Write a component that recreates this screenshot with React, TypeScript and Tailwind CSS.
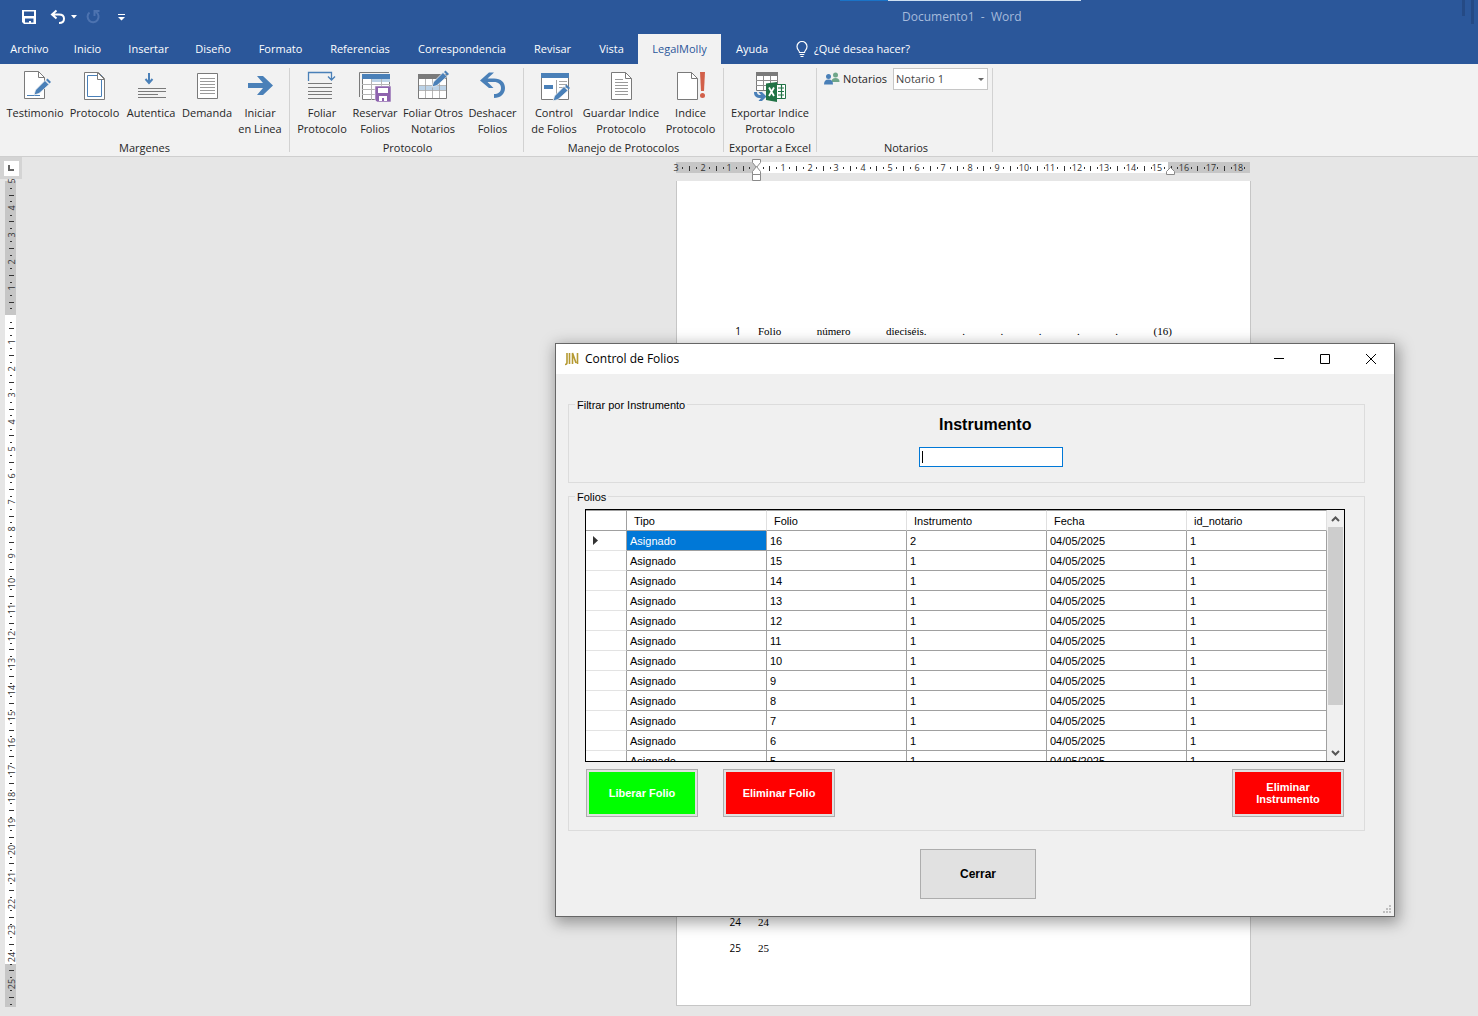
import clsx from "clsx";
import { useState } from "react";

type IconName =
  | "pageEdit"
  | "pageMargins"
  | "arrowLines"
  | "pageLines"
  | "arrowRight"
  | "foliar"
  | "tableSave"
  | "tableEdit"
  | "undo"
  | "formEdit"
  | "pageText"
  | "pageAlert"
  | "excel";

interface IRibbonButton {
  icon: IconName;
  lines: string[];
  width: string;
}

interface IRibbonGroup {
  title: string;
  padding: string;
  buttons: IRibbonButton[];
}

const tabs = [
  { name: "Archivo", width: "w-[59px]" },
  { name: "Inicio", width: "w-[57px]" },
  { name: "Insertar", width: "w-[65px]" },
  { name: "Diseño", width: "w-16" },
  { name: "Formato", width: "w-[71px]" },
  { name: "Referencias", width: "w-[88px]" },
  { name: "Correspondencia", width: "w-[116px]" },
  { name: "Revisar", width: "w-[65px]" },
  { name: "Vista", width: "w-[53px]" },
  { name: "LegalMolly", width: "w-[83px]" },
  { name: "Ayuda", width: "w-[62px]" },
];

const groups: IRibbonGroup[] = [
  {
    title: "Margenes",
    padding: "px-[5px]",
    buttons: [
      { icon: "pageEdit", lines: ["Testimonio"], width: "w-[60px]" },
      { icon: "pageMargins", lines: ["Protocolo"], width: "w-[59px]" },
      { icon: "arrowLines", lines: ["Autentica"], width: "w-[54px]" },
      { icon: "pageLines", lines: ["Demanda"], width: "w-[58px]" },
      { icon: "arrowRight", lines: ["Iniciar", "en Linea"], width: "w-12" },
    ],
  },
  {
    title: "Protocolo",
    padding: "pl-[5px] pr-[3px]",
    buttons: [
      { icon: "foliar", lines: ["Foliar", "Protocolo"], width: "w-[54px]" },
      { icon: "tableSave", lines: ["Reservar", "Folios"], width: "w-[52px]" },
      { icon: "tableEdit", lines: ["Foliar Otros", "Notarios"], width: "w-16" },
      { icon: "undo", lines: ["Deshacer", "Folios"], width: "w-[55px]" },
    ],
  },
  {
    title: "Manejo de Protocolos",
    padding: "px-[3px]",
    buttons: [
      { icon: "formEdit", lines: ["Control", "de Folios"], width: "w-[54px]" },
      { icon: "pageText", lines: ["Guardar Indice", "Protocolo"], width: "w-20" },
      { icon: "pageAlert", lines: ["Indice", "Protocolo"], width: "w-[59px]" },
    ],
  },
  {
    title: "Exportar a Excel",
    padding: "px-1",
    buttons: [
      { icon: "excel", lines: ["Exportar Indice", "Protocolo"], width: "w-[84px]" },
    ],
  },
];

const columns = ["Tipo", "Folio", "Instrumento", "Fecha", "id_notario"];

const rows = [16, 15, 14, 13, 12, 11, 10, 9, 8, 7, 6, 5].map((folio) => ({
  tipo: "Asignado",
  folio,
  instrumento: folio === 16 ? 2 : 1,
  fecha: "04/05/2025",
  notario: 1,
}));

const GRAY = "#7a7a7a";
const BLUE = "#4a80b8";

const Pencil = ({ x, y }: { x: number; y: number }) => (
  <g transform={`translate(${x} ${y})`}>
    <path d="M0 16l1.5-5L11 1.5 15 5.5 5 14.5z" fill={BLUE} stroke="#f2f2f2" strokeWidth="0.8" />
    <path d="M12 1l1.5-1.5 3.5 3.5L15.5 4.5z" fill={BLUE} />
  </g>
);

const Page = ({ x, y }: { x: number; y: number }) => (
  <g transform={`translate(${x} ${y})`}>
    <path d="M.5.5h14l6 6v21H.5z" fill="#fff" stroke={GRAY} />
    <path d="M14.5.5v6h6" fill="none" stroke={GRAY} />
  </g>
);

const RibbonIcon = ({ name }: { name: IconName }) => {
  const art: Record<IconName, React.ReactNode> = {
    pageEdit: (
      <>
        <Page x={5} y={1} />
        <path d="M8 25.5h13" stroke={BLUE} />
        <Pencil x={15} y={9} />
      </>
    ),
    pageMargins: (
      <>
        <path d="M5.5 2.5h14l6 6v21h-20z" fill="#fff" stroke={GRAY} />
        <path d="M8.5 5.5h14v21h-14z" fill="none" stroke={BLUE} />
        <path d="M18.5 2.5v7h7z" fill="#fff" stroke={GRAY} />
      </>
    ),
    arrowLines: (
      <>
        <path d="M14 3v9.5M10.5 9l3.5 4 3.5-4" fill="none" stroke={BLUE} strokeWidth="2" />
        <path d="M3 18.5h28M3 21.5h28M3 24.5h20M3 27.5h28" stroke={GRAY} />
      </>
    ),
    pageLines: (
      <>
        <path d="M6.5 3.5h20v25h-20z" fill="#fff" stroke={GRAY} />
        <path d="M9 8.5h15M9 11.5h15M9 14.5h15M9 17.5h15M9 20.5h15M9 23.5h15" stroke="#9a9a9a" />
      </>
    ),
    arrowRight: (
      <path d="M4 13h15L13 6h6l10 9.5L19 25h-6l6-7H4z" fill={BLUE} />
    ),
    foliar: (
      <>
        <path d="M2.5 11V2.5h23V9M22 6.5l3.5 3.5L29 6.5" fill="none" stroke={BLUE} strokeWidth="1.3" />
        <path d="M2 13.5h24M2 17.5h24M2 21.5h24M2 24.5h24M2 28.5h24" stroke={GRAY} />
      </>
    ),
    tableSave: (
      <>
        <path d="M.5 27V2.5H30" fill="none" stroke={GRAY} />
        <path d="M3.5 4.5h27v25h-27z" fill="#fff" stroke={GRAY} />
        <path d="M3 4h28v5H3z" fill={BLUE} />
        <path d="M13 9h18v3H13z" fill="#bcd3e8" />
        <path d="M3 14.5h28M3 19.5h28M3 24.5h28M12.5 9v21M22.5 9v10" stroke="#b5b5b5" />
        <path d="M16 16h16v16H18l-2-2z" fill="#8e63ae" stroke="#f2f2f2" strokeWidth="0.6" />
        <path d="M19 18h10v5H19zM20 26h8v5h-8z" fill="#fff" />
        <path d="M23 28h2v3h-2z" fill="#8e63ae" />
      </>
    ),
    tableEdit: (
      <>
        <path d="M1.5 4.5h28v24h-28z" fill="#fff" stroke={GRAY} />
        <path d="M1 4h29v5H1z" fill={GRAY} />
        <path d="M2 16h27v4H2z" fill="#bcd3e8" />
        <path d="M8.5 9v19M15.5 9v19M22.5 9v19M2 15.5h27M2 20.5h27" stroke="#a5a5a5" strokeWidth="0.8" />
        <Pencil x={15} y={1} />
      </>
    ),
    undo: (
      <path
        d="M3 10.500L12 2.500h5L10.500 8.500H17c7 0 11 4 11 9.500 0 6-4.500 10-11 10v-4c4 0 7-2 7-6 0-3.500-2.500-6-7-6h-6.500l6 6H12z"
        fill={BLUE}
      />
    ),
    formEdit: (
      <>
        <path d="M3.5 3.5h27v26h-27z" fill="#fff" stroke={GRAY} />
        <path d="M3 3h28v5H3z" fill={BLUE} />
        <path d="M6 15h9v4H6z" fill={BLUE} />
        <path d="M18.5 10v16M21 11.5h8M21 14.5h8M21 17.5h8" stroke="#a5a5a5" />
        <Pencil x={15} y={15} />
      </>
    ),
    pageText: (
      <>
        <Page x={6} y={2} />
        <path d="M10 9.5h8M10 12.5h13M10 15.5h13M10 18.5h13M10 21.5h13M10 24.5h13" stroke="#9a9a9a" />
      </>
    ),
    pageAlert: (
      <>
        <Page x={2} y={2} />
        <path d="M25 2h5l-1 19h-3z" fill="#d2604a" />
        <circle cx="27.5" cy="25.5" r="2.5" fill="#d2604a" />
      </>
    ),
    excel: (
      <>
        <path d="M2.5 2.5h21v18h-21z" fill="#fff" stroke={GRAY} />
        <path d="M2 2h22v4H2z" fill={GRAY} />
        <path d="M2 10.5h22M2 15.5h22M9.5 6v14M16.500 6v14" stroke="#8d8d8d" />
        <path d="M0 22h3c0 2.500 1.500 3 4 3l-2.500-3H8l4.500 4.500L8 31H4.500L7 28c-5 0-7-2-7-6z" fill={BLUE} />
        <path d="M22.5 14.5h9v14h-9z" fill="#fff" stroke="#217346" />
        <path d="M24 18h6M24 21.5h6M24 25h6M27.5 15v13" stroke="#217346" strokeWidth="1.2" />
        <path d="M12 13.5l11-1.5v20l-11-2z" fill="#217346" />
        <path d="M15 17.5l5 8.500M20 17.5l-5 8.500" stroke="#fff" strokeWidth="1.8" />
      </>
    ),
  };

  return (
    <svg width="32" height="32" viewBox="0 0 32 32" className="block shrink-0" aria-hidden="true">
      {art[name]}
    </svg>
  );
};

interface RulerProps {
  vertical?: boolean;
  length: number;
  zero: number;
  end: number;
  from: number;
  to: number;
}

const CM = 26.75;

// Ruler in centimetres, the margins outside [zero, end] are gray
const Ruler: React.FC<RulerProps> = ({ vertical, length, zero, end, from, to }) => {
  const marks: React.ReactNode[] = [];
  for (let i = from * 4; i <= to * 4 + 3; i++) {
    const pos = Math.round(zero + (i * CM) / 4);
    if (pos > length - 2 || pos < 0) continue;
    const part = Math.abs(i) % 4;
    if (part === 0) {
      if (i === 0) continue;
      marks.push(
        <text
          key={i}
          textAnchor="middle"
          transform={vertical ? `translate(10 ${pos}) rotate(-90)` : `translate(${pos} 9)`}
        >
          {Math.abs(i / 4)}
        </text>,
      );
      continue;
    }
    const size = part === 2 ? 5 : 2;
    const start = part === 2 ? 4 : 5;
    marks.push(
      vertical ? (
        <rect key={i} x={start} y={pos} width={size} height="1" />
      ) : (
        <rect key={i} x={pos} y={start} width="1" height={size} />
      ),
    );
  }

  return (
    <svg
      width={vertical ? 11 : length}
      height={vertical ? length : 11}
      className="block overflow-visible font-['Open_Sans',sans-serif] text-[9px]"
      fill="#333"
      aria-hidden="true"
    >
      <rect width={vertical ? 11 : length} height={vertical ? length : 11} fill="#c6c6c6" />
      {vertical ? (
        <rect y={zero} width="11" height={end - zero} fill="#fff" />
      ) : (
        <rect x={zero} width={end - zero} height="11" fill="#fff" />
      )}
      {marks}
      {!vertical && (
        <g fill="#fff" stroke="#8a8a8a">
          <path d={`M${zero - 3.5} -2.500h8v3l-4 5-4-5z`} />
          <path d={`M${zero - 3.5} 12.500v-3l4-5 4 5v3zM${zero - 3.5} 12.500h8v6h-8z`} />
          <path d={`M${end - 1.5} 12.500v-3l4-4 4 4v3z`} />
        </g>
      )}
    </svg>
  );
};

const TitleBar = () => (
  <div className="relative h-[34px] flex items-center text-white">
    <div className="absolute top-0 left-[840px] w-12 h-px bg-[#1a73c7]" />
    <div className="absolute top-0 left-[888px] w-[193px] h-px bg-[#cfe0f2]" />
    <div className="absolute top-0 right-[13px] w-[3px] h-4 bg-[#254a85]" />
    <div className="absolute top-0 right-1 w-[3px] h-6 bg-[#254a85]" />

    <button className="ml-[21px]" aria-label="Guardar">
      <svg width="16" height="16" viewBox="0 0 16 16" fill="currentColor" fillRule="evenodd">
        <path d="M1 1h14v14H3l-2-2zM3 2.500h10V7H3zM4 9.500h8.500v4H10V12H8v1.500H4z" />
      </svg>
    </button>
    <button className="ml-[13px]" aria-label="Deshacer">
      <svg width="16" height="16" viewBox="0 0 16 16" fill="none" stroke="currentColor" strokeWidth="2">
        <path d="M6.5 1.5L2 5.500l4.500 4M2.500 5.500H9c3 0 5 1.700 5 4.200S12 14 9 14" />
      </svg>
    </button>
    <svg className="ml-[5px]" width="6" height="4" viewBox="0 0 6 4" fill="currentColor">
      <path d="M0 0h6L3 3.5z" />
    </svg>
    <button className="ml-2 text-[#4d73b0]" aria-label="Rehacer">
      <svg width="16" height="16" viewBox="0 0 16 16" fill="none" stroke="currentColor" strokeWidth="2">
        <path d="M4.5 3.500A5.500 5.500 0 1 0 11 3M9.500 7V2h5" />
      </svg>
    </button>
    <button className="ml-[17px]" aria-label="Personalizar barra">
      <svg width="7" height="7" viewBox="0 0 7 7" fill="currentColor">
        <path d="M0 0h7v1H0zM0 3h7L3.500 6.500z" />
      </svg>
    </button>
    <span className="ml-[777px] text-xs leading-3 text-[#a6bbdc] whitespace-pre">{"Documento1  -  Word"}</span>
  </div>
);

const RibbonTabs = () => {
  const [active, setActive] = useState("LegalMolly");

  return (
    <nav className="flex h-[30px] text-[11px] text-white whitespace-nowrap">
      {tabs.map((tab) => (
        <button
          key={tab.name}
          onClick={() => setActive(tab.name)}
          className={clsx("flex shrink-0 items-center justify-center", tab.width, {
            "bg-[#f2f2f2] text-[#2b579a]": active === tab.name,
          })}
        >
          {tab.name}
        </button>
      ))}
      <button className="flex items-center gap-[5px] ml-3">
        <svg width="14" height="17" viewBox="0 0 14 17" fill="none" stroke="currentColor" strokeWidth="1.2">
          <path d="M4.5 11.500c0-2-2.500-2.800-2.500-6a5 5 0 0 1 10 0c0 3.200-2.500 4-2.500 6zM4.700 13.500h4.600M5.500 15.500h3" />
        </svg>
        ¿Qué desea hacer?
      </button>
    </nav>
  );
};

const Ribbon = () => (
  <div className="flex h-[93px] py-1 bg-[#f2f2f2] border-b border-[#cfcfcf] text-[11px] text-[#262626]">
    {groups.map((group) => (
      <section
        key={group.title}
        className={clsx("flex flex-col shrink-0 border-r border-[#d2d2d2]", group.padding)}
      >
        <div className="flex flex-1 pt-0.5">
          {group.buttons.map((button) => (
            <button
              key={button.lines.join(" ")}
              className={clsx("flex flex-col items-center shrink-0 hover:bg-[#d5d5d5]", button.width)}
            >
              <RibbonIcon name={button.icon} />
              <span className="mt-[3px] leading-4 whitespace-nowrap">
                {button.lines.map((line) => (
                  <span key={line} className="block">
                    {line}
                  </span>
                ))}
              </span>
            </button>
          ))}
        </div>
        <h2 className="text-center leading-2 whitespace-nowrap">{group.title}</h2>
      </section>
    ))}
    <section className="flex flex-col w-[176px] pl-[7px] pr-1 border-r border-[#d2d2d2]">
      <div className="flex flex-1 items-start">
        <label htmlFor="notario" className="flex items-center h-[22px] w-[69px] gap-[3px]">
          <svg width="16" height="14" viewBox="0 0 16 14" aria-hidden="true">
            <circle cx="11.5" cy="3" r="2.5" fill="#6fa68a" />
            <path d="M7.5 10c0-3 1.500-4 4-4s4 1 4 4z" fill="#6fa68a" />
            <circle cx="4.5" cy="4.5" r="2.5" fill={BLUE} />
            <path d="M0 12.500C0 9 1.500 7.500 4.500 7.500S9 9 9 12.500z" fill={BLUE} />
          </svg>
          Notarios
        </label>
        <div className="relative flex-1">
          <select
            id="notario"
            className="appearance-none w-full h-[22px] pl-0.5 bg-white border border-[#c6c6c6] text-[11px] text-[#444] outline-none"
          >
            <option>Notario 1</option>
          </select>
          <svg className="absolute right-1 top-[10px] pointer-events-none" width="6" height="3" viewBox="0 0 6 3">
            <path d="M0 0h6L3 3z" fill="#666" />
          </svg>
        </div>
      </div>
      <h2 className="text-center leading-2">Notarios</h2>
    </section>
  </div>
);

const Document = () => (
  <main className="flex flex-1">
    <div className="w-[22px] shrink-0">
      <div className="flex items-center justify-center h-[22px] mb-0.5 bg-[#d4d4d4]">
        <div className="flex items-center justify-center size-[15px] bg-white">
          <div className="size-[6px] border-l-2 border-b-2 border-[#666]" />
        </div>
      </div>
      <div className="pl-[5px]">
        <Ruler vertical length={826} zero={134} end={783} from={-5} to={25} />
      </div>
    </div>

    <div className="pl-[654px]">
      <div className="h-6 pt-[5px]">
        <Ruler length={574} zero={80} end={492} from={-3} to={18} />
      </div>
      <article className="w-[575px] h-[825px] pt-[142px] pl-[52px] pr-[78px] bg-white border border-t-0 border-[#c6c6c6] text-[11px] leading-4 text-black">
        <div className="flex font-['Liberation_Serif',serif]">
          <span className="w-3 mr-[17px] text-right font-['Open_Sans',sans-serif] text-[10px]">1</span>
          <p className="flex flex-1 justify-between">
            {["Folio", "número", "dieciséis.", ".", ".", ".", ".", ".", "(16)"].map((word, idx) => (
              <span key={idx}>{word}</span>
            ))}
          </p>
        </div>
        <div className="flex flex-col gap-[10px] mt-[575px]">
          {[24, 25].map((line) => (
            <div key={line} className="flex font-['Liberation_Serif',serif]">
              <span className="w-3 mr-[17px] text-right font-['Open_Sans',sans-serif] text-[10px]">{line}</span>
              <p>{line}</p>
            </div>
          ))}
        </div>
      </article>
    </div>
  </main>
);

const FoliosGrid = () => {
  const [selected, setSelected] = useState(0);

  return (
    <div className="flex h-[253px] bg-white border border-black overflow-hidden">
      <table className="table-fixed self-start w-[741px] border-separate border-spacing-0 text-left">
        <thead>
          <tr className="h-[21px]">
            <th className="w-[41px] p-0 border-r border-b border-t border-[#a0a0a0]" />
            {columns.map((column) => (
              <th
                key={column}
                className="p-0 pt-0.5 pl-[7px] border-t border-r border-b border-[#a0a0a0] border-r-[#e0e0e0] font-normal"
              >
                {column}
              </th>
            ))}
          </tr>
        </thead>
        <tbody>
          {rows.map((row, idx) => (
            <tr key={row.folio} className="h-5" onClick={() => setSelected(idx)}>
              <th className="p-0 border-r border-b border-[#a0a0a0] border-b-[#e3e3e3]">
                {selected === idx && (
                  <svg className="ml-[7px]" width="5" height="9" viewBox="0 0 5 9">
                    <path d="M0 0l5 4.500L0 9z" fill="#333" />
                  </svg>
                )}
              </th>
              {Object.values(row).map((value, col) => (
                <td
                  key={col}
                  className={clsx("p-0 pt-0.5 pl-[3px] border-r border-b border-[#a0a0a0]", {
                    "bg-[#0078d7] text-white": selected === idx && col === 0,
                  })}
                >
                  {value}
                </td>
              ))}
            </tr>
          ))}
        </tbody>
      </table>
      <div className="flex flex-col items-center flex-1 bg-[#f0f0f0]">
        <button className="flex items-center justify-center w-full h-[17px]" aria-label="Subir">
          <svg width="9" height="6" viewBox="0 0 9 6" fill="none" stroke="#555" strokeWidth="2">
            <path d="M1 5l3.500-3.500L8 5" />
          </svg>
        </button>
        <div className="w-[15px] h-[178px] bg-[#cdcdcd]" />
        <button className="flex items-center justify-center w-full h-[17px] mt-auto" aria-label="Bajar">
          <svg width="9" height="6" viewBox="0 0 9 6" fill="none" stroke="#555" strokeWidth="2">
            <path d="M1 1l3.500 3.500L8 1" />
          </svg>
        </button>
      </div>
    </div>
  );
};

const FolioButton = ({ text, color, className }: { text: string; color: string; className?: string }) => (
  <button className={clsx("w-28 h-12 p-[2px] bg-[#e1e1e1] border border-[#adadad] font-bold text-white", className)}>
    <span className={clsx("flex items-center justify-center h-full px-3 leading-3 text-center", color)}>{text}</span>
  </button>
);

const FoliosDialog = () => {
  const [instrumento, setInstrumento] = useState("");

  return (
    <div
      role="dialog"
      aria-label="Control de Folios"
      className="absolute left-[555px] top-[343px] w-[840px] bg-[#f0f0f0] border border-[#666] shadow-[2px_4px_14px_2px_rgba(0,0,0,0.35)] font-['Liberation_Sans',sans-serif] text-[11px] leading-[13px] text-black"
    >
      <header className="flex items-center h-[30px] pl-2 bg-white">
        <svg width="16" height="14" viewBox="0 0 16 14" fill="none" stroke="#b59a32" aria-hidden="true">
          <path d="M3 1v9.500c0 1.500-1 2-2 2M5.500 1v11" strokeWidth="1.6" />
          <path d="M8.500 12V1l3.500 10M13.500 1v11" strokeWidth="1.6" />
        </svg>
        <h1 className="ml-[5px] font-['Open_Sans',sans-serif] text-xs">Control de Folios</h1>
        <div className="flex ml-auto">
          <button className="flex items-center justify-center w-[45px] h-7" aria-label="Minimizar">
            <svg width="11" height="11" viewBox="0 0 11 11" stroke="#000">
              <path d="M0 4.500h10" />
            </svg>
          </button>
          <button className="flex items-center justify-center w-[46px] h-7" aria-label="Maximizar">
            <svg width="11" height="11" viewBox="0 0 11 11" fill="none" stroke="#000">
              <path d="M.5.5h9v9h-9z" />
            </svg>
          </button>
          <button className="flex items-center justify-center w-[46px] h-7" aria-label="Cerrar ventana">
            <svg width="11" height="11" viewBox="0 0 11 11" stroke="#000">
              <path d="M0 0l10 10M10 0L0 10" />
            </svg>
          </button>
        </div>
      </header>

      <div className="pt-[23px] pl-3 pr-[29px] pb-[17px]">
        <fieldset className="border border-[#dcdcdc] pt-0.5 pb-[15px] pl-[350px]">
          <legend className="-ml-[344px] pt-0.5 px-0.5">Filtrar por Instrumento</legend>
          <label htmlFor="instrumento" className="block pl-5 text-base leading-[22px] font-bold">
            Instrumento
          </label>
          <div className="relative w-36 mt-[11px]">
            <input
              id="instrumento"
              value={instrumento}
              onChange={(e) => setInstrumento(e.target.value)}
              className="block w-full h-5 px-[3px] bg-white border border-[#0078d7] outline-none"
            />
            {!instrumento && <span className="absolute left-[3px] top-1 w-px h-3 bg-black pointer-events-none" />}
          </div>
        </fieldset>

        <fieldset className="mt-[6px] border border-[#dcdcdc] pt-[5px] pb-[13px] pl-4 pr-[19px]">
          <legend className="-ml-[10px] pt-0.5 px-0.5">Folios</legend>
          <FoliosGrid />
          <div className="flex gap-[25px] mt-[7px] px-px">
            <FolioButton text="Liberar Folio" color="bg-[#00ff00]" />
            <FolioButton text="Eliminar Folio" color="bg-[#ff0000]" />
            <FolioButton text="Eliminar Instrumento" color="bg-[#ff0000]" className="ml-auto" />
          </div>
        </fieldset>

        <button className="block w-[116px] h-[50px] mt-[18px] ml-[352px] bg-[#e1e1e1] border border-[#adadad] text-xs font-bold">
          Cerrar
        </button>
      </div>

      <svg className="absolute right-[2px] bottom-[2px]" width="9" height="9" viewBox="0 0 9 9" fill="#bfbfbf">
        <path d="M6 0h2v2H6zM3 3h2v2H3zM6 3h2v2H6zM0 6h2v2H0zM3 6h2v2H3zM6 6h2v2H6z" />
      </svg>
    </div>
  );
};

export default function App() {
  return (
    <div className="relative flex flex-col min-h-screen overflow-hidden bg-[#e6e6e6] font-['Open_Sans',sans-serif]">
      <div className="bg-[#2b579a]">
        <TitleBar />
        <RibbonTabs />
      </div>
      <Ribbon />
      <Document />
      <FoliosDialog />
    </div>
  );
}
